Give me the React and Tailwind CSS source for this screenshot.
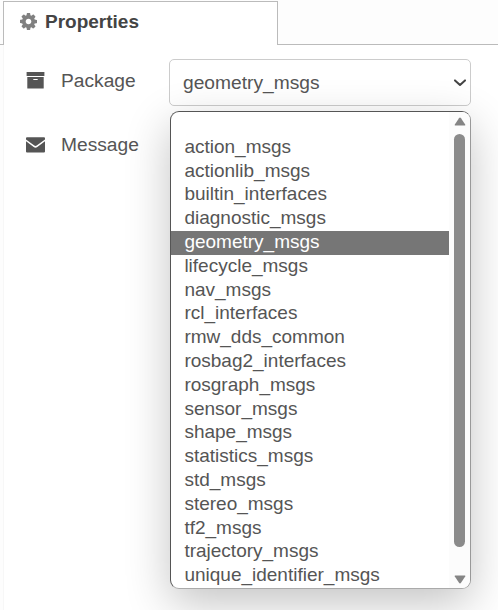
const packages = [
  '', 'action_msgs', 'actionlib_msgs', 'builtin_interfaces', 'diagnostic_msgs',
  'geometry_msgs', 'lifecycle_msgs', 'nav_msgs', 'rcl_interfaces', 'rmw_dds_common',
  'rosbag2_interfaces', 'rosgraph_msgs', 'sensor_msgs', 'shape_msgs', 'statistics_msgs',
  'std_msgs', 'stereo_msgs', 'tf2_msgs', 'trajectory_msgs', 'unique_identifier_msgs',
];

function GearIcon() {
  return (
    <svg viewBox="128 128 1536 1536" className="h-[17px] w-[17px] shrink-0 fill-[#808080]">
      <path d="M1152 896q0-106-75-181t-181-75-181 75-75 181 75 181 181 75 181-75 75-181zm512-109v222q0 12-8 23t-20 13l-185 28q-19 54-39 91 35 50 107 138 10 12 10 25t-9 23q-27 37-99 108t-94 71q-12 0-26-9l-138-108q-44 23-91 38-16 136-29 186-7 28-36 28h-222q-14 0-24.5-8.5t-11.5-21.5l-28-184q-49-16-90-37l-141 107q-10 9-25 9-14 0-25-11-126-114-165-168-7-10-7-23 0-12 8-23 15-21 51-66.5t54-70.5q-27-50-41-99l-183-27q-13-2-21-12.5t-8-23.5v-222q0-12 8-23t19-13l186-28q14-46 39-92-40-57-107-138-10-12-10-24 0-10 9-23 26-36 98.5-107.5t94.5-71.5q13 0 26 10l138 107q44-23 91-38 16-136 29-186 7-28 36-28h222q14 0 24.5 8.5t11.5 21.5l28 184q49 16 90 37l142-107q9-9 24-9 13 0 25 10 129 119 165 170 7 8 7 22 0 12-8 23-15 21-51 66.5t-54 70.5q26 50 41 98l183 28q13 2 21 12.5t8 23.5z" />
    </svg>
  );
}

function ArchiveIcon() {
  return (
    <svg viewBox="0 0 19 17" className="h-[17px] w-[19px] fill-[#555]">
      <path d="M1 0h17q.4 0 .4.4v3.600H.6V.4Q.6 0 1 0z" />
      <path fillRule="evenodd" d="M1.300 4.900h16.400v11.300q0 .4-.4.4H1.700q-.4 0-.4-.4zM7.700 7q-.5 0-.5.5t.5.5h3.600q.5 0 .5-.5t-.5-.5z" />
    </svg>
  );
}

function EnvelopeIcon() {
  return (
    <svg viewBox="0 0 19 16" className="h-4 w-[19px] fill-[#555]">
      <path d="M1 .3h17q1 0 1 1v1.200l-8.300 6.100q-1.200.9-2.400 0L0 2.500V1.300q0-1 1-1z" />
      <path d="M0 4.200l7.700 5.900q1.800 1.300 3.600 0L19 4.200v10.300q0 1-1 1H1q-1 0-1-1z" />
    </svg>
  );
}

function ScrollArrow({ down }) {
  return (
    <svg viewBox="0 0 12 9" className="h-[9px] w-3 shrink-0 fill-[#858585]">
      <path d={down ? 'M1.300.500h9.400q1 0 .5 1L7 7.800q-1 1.200-2 0L.8 1.500q-.5-1 .5-1z' : 'M1.300 8.500h9.400q1 0 .5-1L7 1.200Q6 0 5 1.200L.8 7.500q-.5 1 .5 1z'} />
    </svg>
  );
}

export default function App() {
  return (
    <div className="h-[610px] w-[498px] overflow-hidden bg-[#fdfdfd] font-['Liberation_Sans',Arial,sans-serif] text-[19px] text-[#555]">
      <header className="flex h-[45px] pt-px">
        <div className="w-[3px] border-b border-[#bbb]" />
        <div className="flex w-[275px] items-start border border-b-0 border-[#bbb] bg-white pl-4 pt-[11px]">
          <GearIcon />
          <span className="-mt-0.5 ml-2 font-bold leading-[22px] text-[#444]">Properties</span>
        </div>
        <div className="flex-1 border-b border-[#bbb]" />
      </header>
      <main className="relative ml-[3px] h-[565px] border-l border-[#f7f7f7] bg-white pt-[14px]">
        <div className="flex h-[47px] items-center">
          <div className="ml-[22px] mt-[-5px] w-[35px]"><ArchiveIcon /></div>
          <span className="mt-[-4px] w-[108px] text-[19.2px] leading-[22px]">Package</span>
          <div className="flex h-[47px] w-[302px] items-center justify-between rounded-[5px] border border-[#ccc] bg-white pl-[13px] pr-[3px]">
            <span className="pt-0.5 text-[19.2px]">geometry_msgs</span>
            <svg viewBox="0 0 14 8" className="h-2 w-[14px] fill-none stroke-[#444] stroke-2">
              <path d="M2 1.400 7 6l5-4.600" strokeLinecap="round" strokeLinejoin="round" />
            </svg>
          </div>
        </div>
        <div className="mt-[15px] flex h-[47px] items-center">
          <div className="ml-[22px] w-[35px]"><EnvelopeIcon /></div>
          <span className="text-[19.2px] leading-[22px]">Message</span>
        </div>
        <div className="absolute left-[166px] top-[66px] flex h-[478px] w-[301px] overflow-hidden rounded-[9px] border border-b-[#aaa] border-l-[#555] border-r-[#999] border-t-[#555] bg-white shadow-[0_14px_45px_rgba(0,0,0,0.24)]">
          <ul className="w-[278px]">
            {packages.map((name) => (
              <li key={name} className={`h-[23.8px] pl-[13.4px] leading-[21.8px] ${name === 'geometry_msgs' ? 'bg-[#767676] text-white' : ''}`}>
                {name}
              </li>
            ))}
          </ul>
          <div className="flex flex-1 flex-col items-center bg-[#fcfcfc] pb-1 pt-[5px]">
            <ScrollArrow />
            <div className="mt-2 h-[413px] w-[11px] rounded-full bg-[#8b8b8b]" />
            <div className="mt-auto"><ScrollArrow down /></div>
          </div>
        </div>
      </main>
    </div>
  );
}
